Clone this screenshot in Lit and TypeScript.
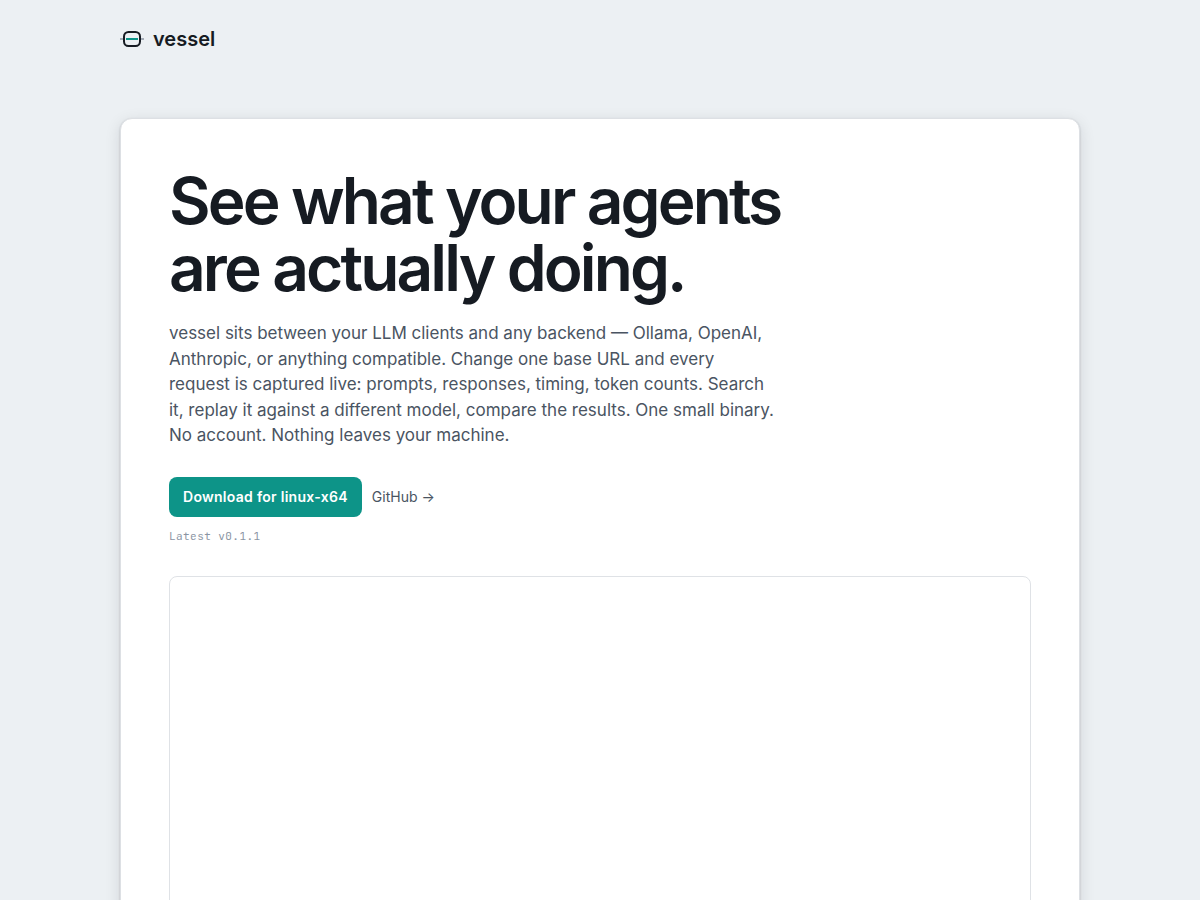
import { LitElement, html, css } from "lit";
import { customElement } from "lit/decorators.js";

@customElement("app-root")
export class AppRoot extends LitElement {
  static styles = css`
    :host {
      display: block;
      box-sizing: border-box;
      height: 100vh;
      overflow: hidden;
      background: #ecf0f3;
      color: #161b22;
      font-family: Inter, "Liberation Sans", sans-serif;
      font-size: 16px;
    }
    *, *::before, *::after { box-sizing: border-box; }
    .shell { max-width: 960px; margin: 0 auto; }
    header { padding: 27px 0; display: flex; align-items: center; }
    .brand {
      display: inline-flex;
      align-items: center;
      gap: 9px;
      color: inherit;
      text-decoration: none;
      font-size: 20px;
      font-weight: 600;
      line-height: 24px;
    }
    .brand svg { display: block; }
    .card {
      margin-top: 40px;
      padding: 48px;
      background: #fff;
      border: 1px solid #dde0e4;
      border-radius: 12px;
      box-shadow: 0 1px 2px rgba(22, 27, 34, 0.24), 0 4px 16px rgba(22, 27, 34, 0.12);
    }
    h1 {
      margin: 0;
      font-size: 64px;
      line-height: 67px;
      font-weight: 600;
      letter-spacing: -0.045em;
    }
    .lead {
      max-width: 608px;
      margin: 20px 0 28px;
      font-size: 17px;
      line-height: 1.5;
      color: #4a5462;
    }
    .actions { display: flex; align-items: center; gap: 10px; }
    .download {
      display: inline-flex;
      align-items: center;
      height: 40px;
      padding: 0 14px;
      border-radius: 8px;
      background: #0d9488;
      color: #fff;
      font-size: 14px;
      font-weight: 600;
      letter-spacing: 0.02em;
      text-decoration: none;
    }
    .github { color: #4a5462; font-size: 14px; text-decoration: none; }
    .version {
      margin: 12px 0 32px;
      font-family: "JetBrains Mono", "DejaVu Sans Mono", monospace;
      font-size: 11px;
      line-height: 15px;
      letter-spacing: 0.04em;
      color: #8a94a3;
    }
    .preview {
      height: 540px;
      border: 1px solid #dfe2e6;
      border-radius: 8px;
    }
  `;

  render() {
    return html`
      <div class="shell">
        <header>
          <a class="brand" href="#">
            <svg width="24" height="24" viewBox="0 0 24 24" fill="none" stroke-width="2" aria-hidden="true">
              <path d="M0 12h3M21 12h3" stroke="#8a94a3" stroke-width="1.5" />
              <rect x="4" y="5" width="16" height="14" rx="4.5" stroke="#161b22" />
              <path d="M6 12h12" stroke="#0d9488" />
            </svg>
            <span>vessel</span>
          </a>
        </header>
        <main class="card">
          <h1>See what your agents<br />are actually doing.</h1>
          <p class="lead">
            vessel sits between your LLM clients and any backend — Ollama, OpenAI, Anthropic, or anything
            compatible. Change one base URL and every request is captured live: prompts, responses, timing,
            token counts. Search it, replay it against a different model, compare the results. One small
            binary. No account. Nothing leaves your machine.
          </p>
          <div class="actions">
            <a class="download" href="#">Download for linux-x64</a>
            <a class="github" href="#">GitHub →</a>
          </div>
          <p class="version">Latest v0.1.1</p>
          <div class="preview"></div>
        </main>
      </div>
    `;
  }
}
